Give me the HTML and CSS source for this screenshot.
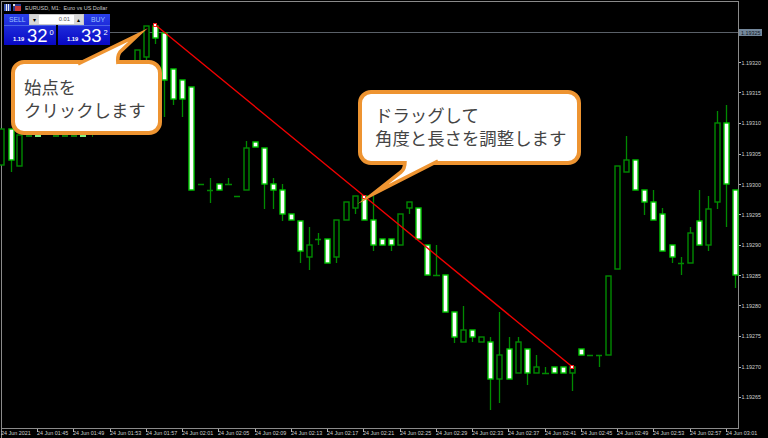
FILE: index.html
```html
<!DOCTYPE html>
<html lang="ja">
<head>
<meta charset="utf-8">
<title>EURUSD, M1</title>
<link rel="stylesheet" href="styles.css">
</head>
<body>
<main class="chart">
<svg class="plot" width="768" height="438" viewBox="0 0 768 438" xmlns="http://www.w3.org/2000/svg">
  <path class="frame" d="M1.5 438V1.5H738.5V428.5H1.5"/>
  <path class="priceline" d="M110 32.5H738"/>
  <path class="ticks" d="M739 62.5h2M739 92.5h2M739 123.5h2M739 154.5h2M739 184.5h2M739 214.5h2M739 245.5h2M739 275.5h2M739 305.5h2M739 336.5h2M739 367.5h2M739 397.5h2M37.5 429v3M73.5 429v3M110.5 429v3M146.5 429v3M182.5 429v3M218.5 429v3M255.5 429v3M291.5 429v3M327.5 429v3M363.5 429v3M400.5 429v3M436.5 429v3M472.5 429v3M508.5 429v3M545.5 429v3M581.5 429v3M617.5 429v3M653.5 429v3M690.5 429v3M726.5 429v3"/>
  <rect class="pricetag" x="739" y="29" width="23" height="7"/>
  <g class="axis">
    <text class="tagtext" x="741" y="34.500">1.19325</text>
    <text x="741.500" y="64.500">1.19320</text><text x="741.500" y="94.500">1.19315</text><text x="741.500" y="125">1.19310</text>
    <text x="741.500" y="156">1.19305</text><text x="741.500" y="186.500">1.19300</text><text x="741.500" y="216.500">1.19295</text>
    <text x="741.500" y="247">1.19290</text><text x="741.500" y="277.500">1.19285</text><text x="741.500" y="307.500">1.19280</text>
    <text x="741.500" y="338">1.19275</text><text x="741.500" y="369">1.19270</text><text x="741.500" y="399">1.19265</text>
    <text x="1" y="435">24 Jun 2021</text><text x="37" y="435">24 Jun 01:45</text><text x="73" y="435">24 Jun 01:49</text>
    <text x="110" y="435">24 Jun 01:53</text><text x="146" y="435">24 Jun 01:57</text><text x="182" y="435">24 Jun 02:01</text>
    <text x="218" y="435">24 Jun 02:05</text><text x="255" y="435">24 Jun 02:09</text><text x="291" y="435">24 Jun 02:13</text>
    <text x="327" y="435">24 Jun 02:17</text><text x="363" y="435">24 Jun 02:21</text><text x="400" y="435">24 Jun 02:25</text>
    <text x="436" y="435">24 Jun 02:29</text><text x="472" y="435">24 Jun 02:33</text><text x="508" y="435">24 Jun 02:37</text>
    <text x="545" y="435">24 Jun 02:41</text><text x="581" y="435">24 Jun 02:45</text><text x="617" y="435">24 Jun 02:49</text>
    <text x="653" y="435">24 Jun 02:53</text><text x="690" y="435">24 Jun 02:57</text><text x="726" y="435">24 Jun 03:01</text>
  </g>
  <path class="wick" d="M11.500 160V172M155.500 38V44M164.500 80V117M173.500 99V105M182.500 99V117M146.500 57V62
  M198 184.500H204M207 190.500H213M210.500 178V203M228.500 178V184M225 184.500H232M234 196.500H240M246.500 141V148M264.500 184V209M273.500 178V184M273.500 190V209M282.500 184V190M282.500 214V221M300.500 251V263M309.500 227V245M309.500 257V270M315 239.500H321M318.500 233V245M336.500 257V263M355.500 208V214M373.500 196V220M373.500 245V251M391.500 245V251M409.500 208V214
  M436.500 245V275M433 275.500H440M454.500 337V343M463.500 306V330M472.500 337V342M490.500 337V342M490.500 379V410M499.500 312V355M499.500 379V403M509.500 337V349M518.500 337V342M527.500 373V385M536.500 355V367M545.500 367V373M542 373.500H549M572.500 373V391M587 355.500H593M596 355.500H602M599.500 355V367
  M626.500 136V160M644.500 202V215M653.500 190V202M662.500 208V214M672.500 257V263M678 263.500H684M681.500 257V275M690.500 227V233M699.500 190V221M708.500 196V209M708.500 245V251M717.500 111V123M717.500 202V209M726.500 105V123M726.500 184V227M735.500 275V288"/>
  <g class="peek">
    <rect x="26" y="135" width="6" height="2"/><rect x="53" y="135" width="6" height="2"/><rect x="62" y="135" width="6" height="2"/><rect x="71" y="135" width="6" height="2"/><rect x="92" y="135" width="1" height="2"/>
  </g>
  <g class="peek-light">
    <rect x="35" y="135" width="6" height="2"/><rect x="80" y="135" width="6" height="2"/>
  </g>
  <g class="hollow">
    <rect x="-1" y="129" width="5" height="36"/><rect x="17" y="135" width="5" height="31"/>
    <rect x="135" y="50" width="5" height="30"/><rect x="144" y="26" width="5" height="31"/>
    <rect x="244" y="148" width="5" height="42"/><rect x="307" y="245" width="5" height="12"/>
    <rect x="334" y="220" width="5" height="37"/><rect x="344" y="202" width="5" height="18"/>
    <rect x="353" y="196" width="5" height="12"/><rect x="398" y="214" width="5" height="31"/>
    <rect x="407" y="202" width="5" height="6"/><rect x="461" y="330" width="5" height="12"/>
    <rect x="479" y="337" width="5" height="5"/><rect x="497" y="355" width="5" height="24"/>
    <rect x="516" y="342" width="5" height="31"/><rect x="534" y="367" width="5" height="6"/>
    <rect x="570" y="367" width="5" height="6"/><rect x="606" y="276" width="5" height="79"/>
    <rect x="615" y="166" width="5" height="103"/><rect x="624" y="160" width="5" height="12"/>
    <rect x="688" y="233" width="5" height="30"/><rect x="706" y="209" width="5" height="36"/>
    <rect x="715" y="123" width="5" height="79"/>
  </g>
  <g class="solid">
    <rect x="9" y="129" width="5" height="31"/><rect x="153" y="26" width="5" height="12"/>
    <rect x="162" y="33" width="5" height="47"/><rect x="171" y="69" width="5" height="30"/>
    <rect x="180" y="80" width="5" height="19"/><rect x="189" y="87" width="5" height="103"/>
    <rect x="217" y="184" width="5" height="6"/><rect x="253" y="142" width="5" height="5"/>
    <rect x="262" y="148" width="5" height="36"/><rect x="271" y="184" width="5" height="6"/>
    <rect x="280" y="190" width="5" height="24"/><rect x="289" y="214" width="5" height="6"/>
    <rect x="298" y="221" width="5" height="30"/><rect x="325" y="239" width="5" height="24"/>
    <rect x="362" y="196" width="5" height="24"/><rect x="371" y="220" width="5" height="25"/>
    <rect x="380" y="239" width="5" height="6"/><rect x="389" y="239" width="5" height="6"/>
    <rect x="416" y="208" width="5" height="31"/><rect x="425" y="245" width="5" height="30"/>
    <rect x="443" y="275" width="5" height="37"/><rect x="452" y="312" width="5" height="25"/>
    <rect x="470" y="330" width="5" height="7"/><rect x="488" y="342" width="5" height="37"/>
    <rect x="507" y="349" width="5" height="30"/><rect x="525" y="349" width="5" height="24"/>
    <rect x="552" y="367" width="5" height="6"/><rect x="561" y="367" width="5" height="6"/>
    <rect x="579" y="349" width="5" height="6"/><rect x="633" y="160" width="5" height="30"/>
    <rect x="642" y="190" width="5" height="12"/><rect x="651" y="202" width="5" height="18"/>
    <rect x="660" y="214" width="5" height="37"/><rect x="670" y="245" width="5" height="12"/>
    <rect x="697" y="221" width="5" height="24"/><rect x="724" y="123" width="5" height="61"/>
    <rect x="733" y="190" width="5" height="85"/>
  </g>
  <path class="trend" d="M155.500 25L364 196L572.500 367"/>
  <g class="handles">
    <rect x="153.500" y="23.500" width="3" height="3"/><rect x="362.500" y="195" width="3" height="3"/><rect x="570.500" y="365.500" width="3" height="3"/>
  </g>
</svg>

<header class="title">
  <svg class="flags" width="17" height="7" viewBox="0 0 17 7" xmlns="http://www.w3.org/2000/svg">
    <rect width="7" height="7" fill="#3c58b8"/><rect x="2" width="1" height="7" fill="#e8e8f0"/><rect x="4" width="1" height="7" fill="#e8e8f0"/>
    <rect x="9" width="8" height="7" fill="#2a3a90"/><rect x="11" y="2" width="6" height="5" fill="#c83838"/><rect x="9" width="2" height="2" fill="#e0e0e0"/>
  </svg>
  <span class="title-text">EURUSD, M1:&nbsp; Euro vs US Dollar</span>
</header>

<section class="trade">
  <div class="side">
    <div class="side-label">SELL</div>
    <div class="quote"><span class="q-small">1.19</span><span class="q-big">32</span><sup class="q-sup">0</sup></div>
  </div>
  <div class="side">
    <div class="side-label side-label-buy">BUY</div>
    <div class="quote"><span class="q-small">1.19</span><span class="q-big">33</span><sup class="q-sup">2</sup></div>
  </div>
  <div class="qty">
    <span class="spin">▾</span><span class="qty-value">0.01</span><span class="spin">▴</span>
  </div>
</section>

<aside class="callout callout-start">
  <svg class="tail" width="80" height="40" viewBox="0 0 80 40" xmlns="http://www.w3.org/2000/svg"><path d="M1 39L61 10L43 27Q40 31 41 39"/></svg>
  <p class="callout-text">始点を<br>クリックします</p>
</aside>
<aside class="callout callout-drag">
  <svg class="tail" width="70" height="40" viewBox="0 0 70 40" xmlns="http://www.w3.org/2000/svg"><path d="M33 0Q33 8 29 11L1 33L66 0"/></svg>
  <p class="callout-text">ドラッグして<br>角度と長さを調整します</p>
</aside>
</main>
</body>
</html>
```

FILE: styles.css
```css
* { box-sizing: border-box; }
html, body { margin: 0; padding: 0; background: #000; overflow: hidden; }

.chart { position: relative; width: 768px; height: 438px; background: #000; overflow: hidden; }
.plot { display: block; }

.frame { fill: none; stroke: #8a8a8a; stroke-width: 1; shape-rendering: crispEdges; }
.priceline { fill: none; stroke: #5a6068; stroke-width: 1; shape-rendering: crispEdges; }
.ticks { fill: none; stroke: #b0b0b0; stroke-width: 1; shape-rendering: crispEdges; }
.pricetag { fill: #74889c; }
.axis text { font: 5.4px "Liberation Sans", sans-serif; fill: #d0d0d0; }
.axis .tagtext { fill: #10161c; }

.wick { fill: none; stroke: #008a00; stroke-width: 1.3; }
.peek rect { fill: #0a7a0a; }
.peek-light rect { fill: #80f080; }
.hollow rect { fill: #000; stroke: #008a00; stroke-width: 1.4; }
.solid rect { fill: #fff; stroke: #00c800; stroke-width: 1.4; }
.trend { fill: none; stroke: #f00000; stroke-width: 1.4; }
.handles rect { fill: #fff; stroke: #f02020; stroke-width: 1; shape-rendering: crispEdges; }

.title { position: absolute; left: 4px; top: 4px; display: flex; align-items: center; gap: 4px; height: 7px; }
.flags { display: block; }
.title-text { font: 5.5px "Liberation Sans", sans-serif; color: #c8c8c8; white-space: nowrap; }

.trade { position: absolute; left: 4px; top: 14px; display: flex; gap: 2px; width: 106px; height: 31px; }
.side { flex: 1; display: flex; flex-direction: column; background: linear-gradient(#2a40e8, #0808c4); }
.side-label { height: 12px; padding-left: 5px; font: 6.8px/12px "Liberation Sans", sans-serif; color: #9cc0ff; border-bottom: 1px solid #4a62e6; }
.side-label-buy { padding-left: 33px; }
.quote { flex: 1; display: flex; align-items: flex-start; padding-left: 9px; color: #fff; }
.q-small { margin-top: 9px; font: bold 5.8px/8px "Liberation Sans", sans-serif; width: 14px; }
.q-big { font: 18.500px/19px "Liberation Sans", sans-serif; }
.q-sup { margin: 2px 0 0 2px; font: 7.500px/9px "Liberation Sans", sans-serif; vertical-align: baseline; }

.qty { position: absolute; left: 25px; top: 0; width: 55px; height: 11px; display: flex; align-items: stretch; background: #fff; border: 1px solid #c8c8c8; }
.spin { width: 9px; background: #d8d8d8; color: #000; font: 6px/9px "DejaVu Sans", sans-serif; text-align: center; }
.qty-value { flex: 1; padding-right: 4px; text-align: right; font: 5.8px/9px "Liberation Sans", sans-serif; color: #555; }

.callout { position: absolute; background: #fff; border: 4px solid #ee9431; border-radius: 13px; height: 75px; }
.callout-start { left: 11px; top: 60px; width: 151px; }
.callout-drag { left: 358px; top: 90px; width: 223px; }
.callout-text { margin: 0; font: 17.400px/22.500px "Noto Sans CJK JP", sans-serif; color: #444; white-space: nowrap; }
.callout-start .callout-text { padding: 12px 0 0 9px; }
.callout-drag .callout-text { padding: 10px 0 0 13px; }

.tail { position: absolute; display: block; overflow: visible; }
.tail path { fill: #fff; stroke: #ee9431; stroke-width: 3.6; stroke-linejoin: miter; stroke-miterlimit: 12; }
.callout-start .tail { left: 62px; top: -39px; }
.callout-drag .tail { left: 10px; top: 67px; }
```
